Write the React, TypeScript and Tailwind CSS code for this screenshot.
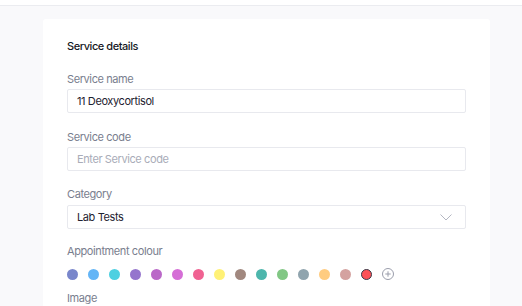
import React from "react";

const colors = [
  "#7986cb",
  "#64b5f6",
  "#4dd0e1",
  "#9575cd",
  "#ba68c8",
  "#d56ed6",
  "#f06292",
  "#fff176",
  "#a1887f",
  "#4db6ac",
  "#81c784",
  "#90a4ae",
  "#ffcc80",
  "#d4a2a0",
];

export default function App() {
  return (
    <div
      className="w-[522px] h-[306px] overflow-hidden bg-[#f9f9fb] flex flex-col tracking-[-0.025em]"
      style={{ fontFamily: "Inter, 'Noto Sans', sans-serif" }}
    >
      <div className="h-[6px] bg-white border-b border-[#ebecf0] shrink-0" />
      <div className="pt-[13px] pl-[43px] pr-[32px]">
        <div className="bg-white rounded-[3px] h-[400px] px-[24px] pt-[20px]">
          <div className="text-[11px] leading-[14px] text-[#151824] font-medium tracking-[-0.04em]">Service details</div>

          <div className="mt-[19px] text-[11px] leading-[14px] text-[#797e8e]">Service name</div>
          <div className="mt-[3px] h-[24px] border border-[#e8e9ee] rounded-[2px] flex items-center px-[9px] text-[11px] text-[#1e2230]">
            11 Deoxycortisol
          </div>

          <div className="mt-[17px] text-[11px] leading-[14px] text-[#797e8e]">Service code</div>
          <div className="mt-[3px] h-[24px] border border-[#e8e9ee] rounded-[2px] flex items-center px-[9px] text-[11px] text-[#a9acb8]">
            Enter Service code
          </div>

          <div className="mt-[16px] text-[11px] leading-[14px] text-[#797e8e]">Category</div>
          <div className="mt-[4px] h-[24px] border border-[#e8e9ee] rounded-[2px] flex items-center justify-between pl-[9px] pr-[13px] text-[11px] text-[#1e2230]">
            <span>Lab Tests</span>
            <svg width="12" height="7" viewBox="0 0 12 7" fill="none">
              <path d="M0.5 0.5L6 6L11.5 0.5" stroke="#b4b7c2" strokeWidth="1" />
            </svg>
          </div>

          <div className="mt-[15px] text-[11px] leading-[14px] text-[#797e8e]">Appointment colour</div>
          <div className="mt-[10px] flex items-center gap-[10px]">
            {colors.map((c) => (
              <div key={c} className="w-[11px] h-[11px] rounded-full" style={{ backgroundColor: c }} />
            ))}
            <div className="w-[11px] h-[11px] rounded-full bg-[#fc5156] border border-[#363a48]" />
            <svg width="12" height="12" viewBox="0 0 12 12" fill="none">
              <circle cx="6" cy="6" r="5.5" stroke="#9a9dab" strokeWidth="1" />
              <path d="M6 3.3V8.7M3.3 6H8.7" stroke="#9a9dab" strokeWidth="1" />
            </svg>
          </div>

          <div className="mt-[11px] text-[11px] leading-[14px] text-[#797e8e]">Image</div>
        </div>
      </div>
    </div>
  );
}
